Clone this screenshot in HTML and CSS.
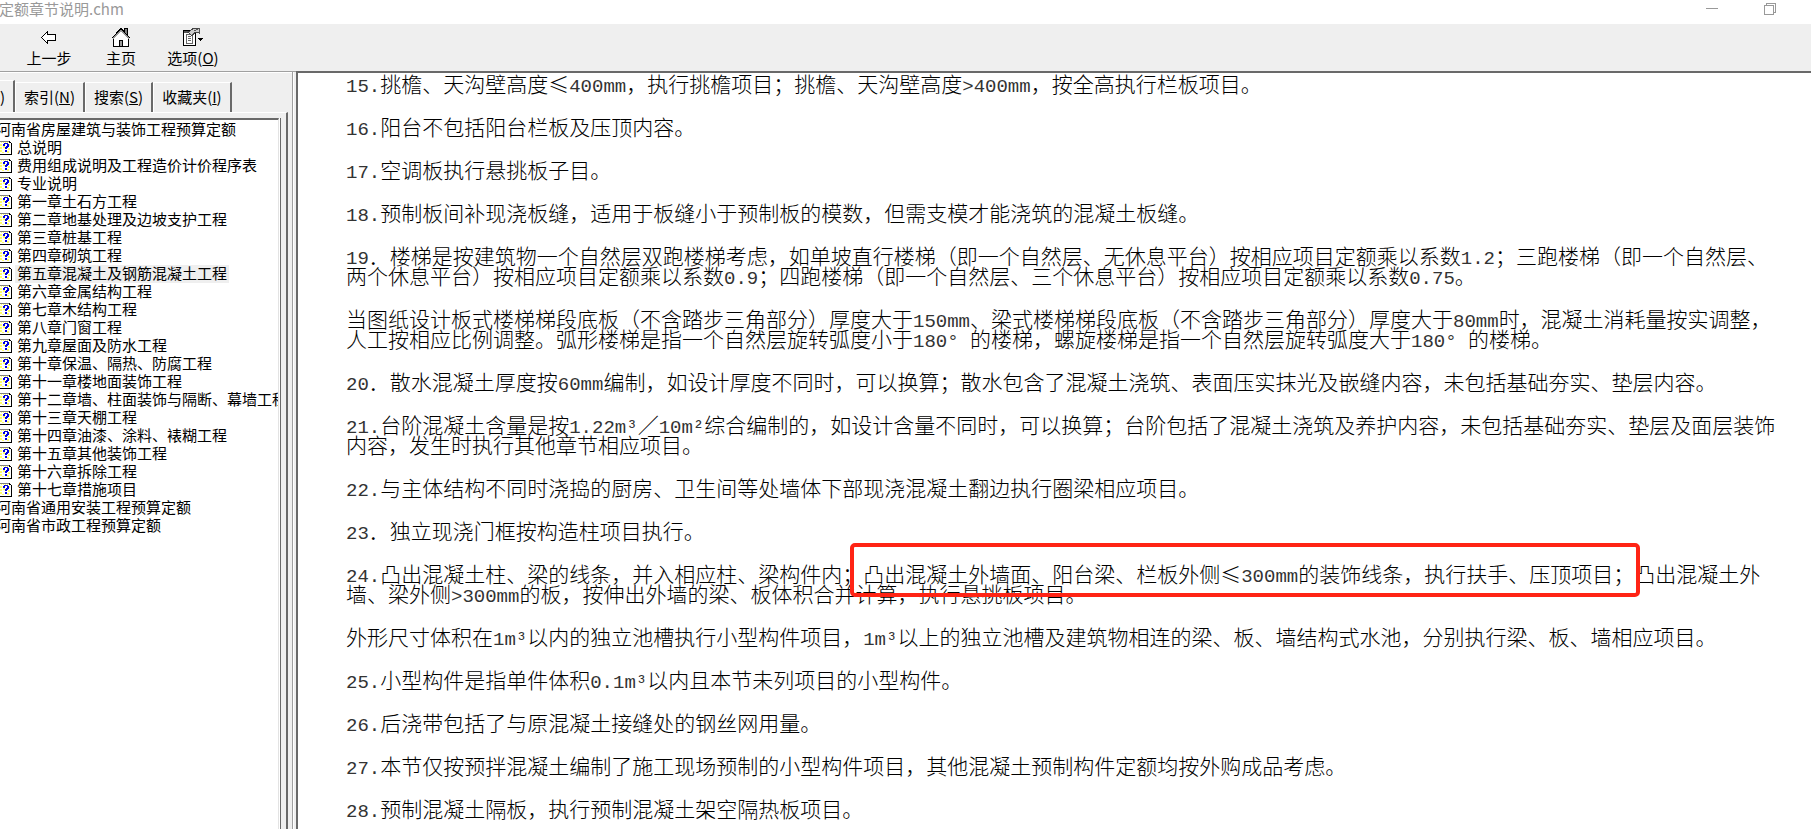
FILE: index.html
```
<!DOCTYPE html>
<html lang="zh-CN">

<head>
    <meta charset="UTF-8">
    <meta name="viewport" content="width=device-width, initial-scale=1.0">
    <title>定额章节说明.chm</title>
    <link rel="stylesheet" href="styles.css">
</head>

<body>
    <!-- question mark page icon, shared by all tree topics -->
    <svg class="defs" width="0" height="0" aria-hidden="true">
        <symbol id="topic" viewBox="0 0 12 14" shape-rendering="crispEdges">
            <path fill="#808080" d="M0 0h9v1H0z" />
            <path fill="#fff" d="M0 1h11v12H0z" />
            <path fill="#ffff66" d="M1 1h1v1H1zM3 1h1v1H3zM5 1h1v1H5zM7 1h1v1H7zM0 3h2v2H0zM8 3h2v2H8zM0 6h2v2H0zM8 7h2v2H8zM0 9h2v2H0zM7 10h2v2H7zM2 11h2v1H2zM3 5h2v2H3z" />
            <path fill="#000" d="M9 0h1v1h1v1h1v12H0v-1h11V2H9z" />
            <path fill="#0000e0" d="M4 2h4v1h1v3H8v1H7v1H5V6h1V5h1V3H5v2H3V3h1zM5 9h2v2H5z" />
        </symbol>
    </svg>

    <header class="titlebar">
        <span class="title">定额章节说明.chm</span>
        <button class="win-btn" aria-label="最小化">
            <svg width="12" height="12" shape-rendering="crispEdges"><path fill="#999" d="M0 5h12v1H0z" /></svg>
        </button>
        <button class="win-btn" aria-label="还原">
            <svg width="12" height="12" shape-rendering="crispEdges"><path fill="none" stroke="#999" d="M.5 2.5h9v9h-9zM2.5 2.5v-2h9v9h-2" /></svg>
        </button>
    </header>

    <nav class="toolbar">
        <button class="tool">
            <svg width="16" height="20" shape-rendering="crispEdges"><path fill="#fff" stroke="#000" d="M.5 10.5l6-6v3h8v6h-8v3z" /></svg>
            <span>上一步</span>
        </button>
        <button class="tool">
            <svg width="20" height="20" shape-rendering="crispEdges">
                <path fill="#808080" stroke="#000" d="M13.5 6V1.5h3V9z" />
                <path fill="#fff" stroke="#000" d="M2.5 10.5v9h15v-9L10 3z" />
                <path fill="none" stroke="#999" stroke-width="2" d="M2 11.5l8-8 8 8" />
                <path fill="none" stroke="#000" d="M.5 11.5L10 1.500l9.500 10" />
                <path fill="#999" stroke="#000" d="M8.500 19.500v-6h3v6z" />
            </svg>
            <span>主页</span>
        </button>
        <button class="tool">
            <svg width="20" height="20" shape-rendering="crispEdges">
                <path fill="#fff" stroke="#000" d="M.5 3.500h12v15H.5z" />
                <path fill="#555" d="M1 4h6v2H1z" />
                <path fill="none" stroke="#666" d="M3.500 7.500h6v9h-6zM5 9.500h3M5 11.500h3M5 13.500h3" />
                <path fill="#ccc" stroke="#444" d="M5 5.500l5-4h6v4h-4l-3 3z" />
                <path fill="#555" d="M16 1h1v6h-1zM11 3h2v1h-2zM13 2h2v1h-2z" />
                <path fill="#000" d="M15 11h5v1h-1v1h-1v1h-1v-1h-1v-1h-1z" />
            </svg>
            <span>选项(<u>O</u>)</span>
        </button>
    </nav>

    <div class="workspace">
        <aside class="sidebar">
            <div class="tabs">
                <button class="tab active">)</button>
                <button class="tab">索引(<u>N</u>)</button>
                <button class="tab">搜索(<u>S</u>)</button>
                <button class="tab">收藏夹(<u>I</u>)</button>
            </div>
            <div class="tab-page">
                <ul class="tree">
                    <li class="book">河南省房屋建筑与装饰工程预算定额</li>
                    <li><svg><use href="#topic" /></svg><a href="#">总说明</a></li>
                    <li><svg><use href="#topic" /></svg><a href="#">费用组成说明及工程造价计价程序表</a></li>
                    <li><svg><use href="#topic" /></svg><a href="#">专业说明</a></li>
                    <li><svg><use href="#topic" /></svg><a href="#">第一章土石方工程</a></li>
                    <li><svg><use href="#topic" /></svg><a href="#">第二章地基处理及边坡支护工程</a></li>
                    <li><svg><use href="#topic" /></svg><a href="#">第三章桩基工程</a></li>
                    <li><svg><use href="#topic" /></svg><a href="#">第四章砌筑工程</a></li>
                    <li><svg><use href="#topic" /></svg><a href="#" class="selected">第五章混凝土及钢筋混凝土工程</a></li>
                    <li><svg><use href="#topic" /></svg><a href="#">第六章金属结构工程</a></li>
                    <li><svg><use href="#topic" /></svg><a href="#">第七章木结构工程</a></li>
                    <li><svg><use href="#topic" /></svg><a href="#">第八章门窗工程</a></li>
                    <li><svg><use href="#topic" /></svg><a href="#">第九章屋面及防水工程</a></li>
                    <li><svg><use href="#topic" /></svg><a href="#">第十章保温、隔热、防腐工程</a></li>
                    <li><svg><use href="#topic" /></svg><a href="#">第十一章楼地面装饰工程</a></li>
                    <li><svg><use href="#topic" /></svg><a href="#">第十二章墙、柱面装饰与隔断、幕墙工程</a></li>
                    <li><svg><use href="#topic" /></svg><a href="#">第十三章天棚工程</a></li>
                    <li><svg><use href="#topic" /></svg><a href="#">第十四章油漆、涂料、裱糊工程</a></li>
                    <li><svg><use href="#topic" /></svg><a href="#">第十五章其他装饰工程</a></li>
                    <li><svg><use href="#topic" /></svg><a href="#">第十六章拆除工程</a></li>
                    <li><svg><use href="#topic" /></svg><a href="#">第十七章措施项目</a></li>
                    <li class="book">河南省通用安装工程预算定额</li>
                    <li class="book">河南省市政工程预算定额</li>
                </ul>
            </div>
        </aside>

        <div class="splitter"></div>

        <main class="content">
            <p><span class="n">15.</span>挑檐、天沟壁高度≤<span class="n">400mm</span>，执行挑檐项目；挑檐、天沟壁高度<span class="n">&gt;400mm</span>，按全高执行栏板项目。</p>
            <p><span class="n">16.</span>阳台不包括阳台栏板及压顶内容。</p>
            <p><span class="n">17.</span>空调板执行悬挑板子目。</p>
            <p><span class="n">18.</span>预制板间补现浇板缝，适用于板缝小于预制板的模数，但需支模才能浇筑的混凝土板缝。</p>
            <p><span class="n">19</span>．楼梯是按建筑物一个自然层双跑楼梯考虑，如单坡直行楼梯（即一个自然层、无休息平台）按相应项目定额乘以系数<span class="n">1.2</span>；三跑楼梯（即一个自然层、<br>两个休息平台）按相应项目定额乘以系数<span class="n">0.9</span>；四跑楼梯（即一个自然层、三个休息平台）按相应项目定额乘以系数<span class="n">0.75</span>。</p>
            <p>当图纸设计板式楼梯梯段底板（不含踏步三角部分）厚度大于<span class="n">150mm</span>、梁式楼梯梯段底板（不含踏步三角部分）厚度大于<span class="n">80mm</span>时，混凝土消耗量按实调整，<br>人工按相应比例调整。弧形楼梯是指一个自然层旋转弧度小于<span class="n">180° </span>的楼梯，螺旋楼梯是指一个自然层旋转弧度大于<span class="n">180° </span>的楼梯。</p>
            <p><span class="n">20</span>．散水混凝土厚度按<span class="n">60mm</span>编制，如设计厚度不同时，可以换算；散水包含了混凝土浇筑、表面压实抹光及嵌缝内容，未包括基础夯实、垫层内容。</p>
            <p><span class="n">21.</span>台阶混凝土含量是按<span class="n">1.22m³</span>／<span class="n">10m²</span>综合编制的，如设计含量不同时，可以换算；台阶包括了混凝土浇筑及养护内容，未包括基础夯实、垫层及面层装饰<br>内容，发生时执行其他章节相应项目。</p>
            <p><span class="n">22.</span>与主体结构不同时浇捣的厨房、卫生间等处墙体下部现浇混凝土翻边执行圈梁相应项目。</p>
            <p><span class="n">23</span>．独立现浇门框按构造柱项目执行。</p>
            <p class="marked"><span class="n">24.</span>凸出混凝土柱、梁的线条，并入相应柱、梁构件内；凸出混凝土外墙面、阳台梁、栏板外侧≤<span class="n">300mm</span>的装饰线条，执行扶手、压顶项目；凸出混凝土外<br>墙、梁外侧<span class="n">&gt;300mm</span>的板，按伸出外墙的梁、板体积合并计算，执行悬挑板项目。</p>
            <p>外形尺寸体积在<span class="n">1m³</span>以内的独立池槽执行小型构件项目，<span class="n">1m³</span>以上的独立池槽及建筑物相连的梁、板、墙结构式水池，分别执行梁、板、墙相应项目。</p>
            <p><span class="n">25.</span>小型构件是指单件体积<span class="n">0.1m³</span>以内且本节未列项目的小型构件。</p>
            <p><span class="n">26.</span>后浇带包括了与原混凝土接缝处的钢丝网用量。</p>
            <p><span class="n">27.</span>本节仅按预拌混凝土编制了施工现场预制的小型构件项目，其他混凝土预制构件定额均按外购成品考虑。</p>
            <p><span class="n">28.</span>预制混凝土隔板，执行预制混凝土架空隔热板项目。</p>
        </main>
    </div>
</body>

</html>
```
FILE: styles.css
```
*,
*::after {
    box-sizing: border-box;
}

body {
    margin: 0;
    height: 100vh;
    display: flex;
    flex-direction: column;
    overflow: hidden;
    background: #fff;
    color: #000;
    font-family: "Noto Sans CJK SC", sans-serif;
    font-size: 15px;
    line-height: 18px;
}

button {
    margin: 0;
    padding: 0;
    border: 0;
    background: none;
    color: inherit;
    font: inherit;
}

.defs {
    position: absolute;
}

/* title bar */
.titlebar {
    flex: none;
    display: flex;
    height: 24px;
    padding-right: 12px;
    color: #999;
}

.title {
    flex: 1;
    margin-left: -1px;
}

.win-btn {
    width: 58px;
    height: 18px;
    display: flex;
    justify-content: center;
    align-items: center;
}

/* toolbar */
.toolbar {
    flex: none;
    display: flex;
    height: 47px;
    padding-left: 13px;
    background: #efefef;
}

.tool {
    width: 72px;
    padding-top: 3px;
    display: flex;
    flex-direction: column;
    align-items: center;
    gap: 2px;
}

/* panes */
.workspace {
    flex: 1;
    min-height: 0;
    display: flex;
    background: #efefef;
}

.sidebar {
    flex: none;
    width: 292px;
    padding: 8px 4px 0 0;
    display: flex;
    flex-direction: column;
    border-top: 1px solid #a0a0a0;
    box-shadow: inset 0 1px #fff;
}

.tabs {
    flex: none;
    display: flex;
    align-items: flex-end;
    height: 32px;
}

.tab {
    height: 30px;
    padding: 0 8px 2px;
    border-top: 1px solid #fff;
    border-left: 1px solid #fff;
    border-right: 2px solid #696969;
    white-space: nowrap;
}

.tab.active {
    width: 15px;
    height: 32px;
    padding: 0;
    border-left: 0;
    text-align: left;
}

.tab-page {
    flex: 1;
    min-height: 0;
    display: flex;
    padding: 5px 7px 0 0;
    border-top: 1px solid #fff;
    border-right: 2px solid #696969;
}

.tree {
    flex: 1;
    min-width: 0;
    margin: 0;
    padding: 1px 0 0;
    overflow: hidden;
    list-style: none;
    background: #fff;
    border-top: 2px solid #696969;
    border-right: 1px solid #e3e3e3;
    box-shadow: 1px 0 #fff, 2px 0 #696969;
    line-height: 16px;
    white-space: nowrap;
}

.tree li {
    display: flex;
    align-items: center;
    height: 18px;
}

.tree .book {
    margin-left: -4px;
    padding-bottom: 2px;
}

.tree svg {
    flex: none;
    width: 12px;
    height: 14px;
    margin-right: 3px;
}

.tree a {
    padding: 0 2px 2px;
    color: inherit;
    text-decoration: none;
}

.tree .selected {
    background: #efefef;
}

.splitter {
    flex: none;
    width: 4px;
    border-top: 1px solid #a0a0a0;
    border-left: 1px solid #a0a0a0;
    box-shadow: inset 1px 0 #fff;
}

.content {
    flex: 1;
    min-width: 0;
    padding: 0 0 0 48px;
    overflow: hidden;
    background: #fff;
    border-top: 2px solid #696969;
    border-left: 2px solid #696969;
    font-size: 21px;
    font-weight: 300;
    line-height: 20px;
    white-space: nowrap;
}

.content p {
    margin: 0 0 23px;
}

/* latin letters and figures */
.n {
    color: #333;
    font-family: "Liberation Mono", monospace;
    font-size: 19px;
    font-weight: 400;
    line-height: 0;
}

/* red frame over the highlighted clause */
.marked {
    position: relative;
}

.marked::after {
    content: "";
    position: absolute;
    top: -20px;
    left: 504px;
    width: 790px;
    height: 54px;
    border: 4px solid #ff2415;
    border-radius: 5px;
}
```
